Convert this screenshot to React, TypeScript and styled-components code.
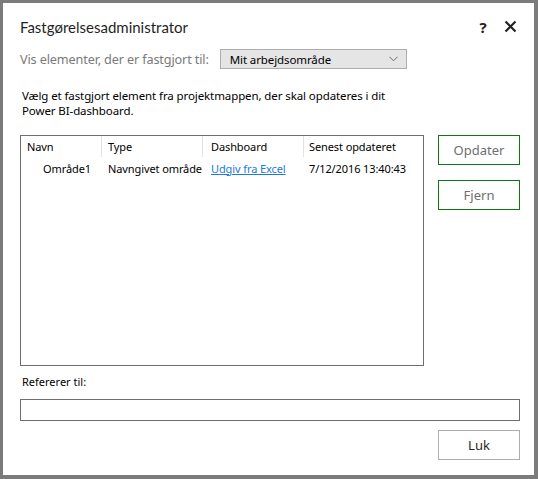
import React from "react";
import styled, { createGlobalStyle } from "styled-components";

const Global = createGlobalStyle`
  html, body { margin: 0; padding: 0; background: #ffffff; }
  body { font-family: "Noto Sans", "Open Sans", sans-serif; color: #000; }
`;

const Window = styled.div`
  box-sizing: border-box;
  width: 538px;
  height: 479px;
  border-style: solid;
  border-color: #7b7b7b;
  border-width: 3px 4px 4px 3px;
  background: #fff;
  padding: 0 14px 0 17px;
  display: flex;
  flex-direction: column;
`;

const TitleBar = styled.div`
  display: flex;
  align-items: center;
  height: 45px;
  padding-top: 2px;
  box-sizing: border-box;
`;

const Title = styled.div`
  flex: 1;
  font-family: "Lato", "Noto Sans", sans-serif;
  font-size: 15px;
  color: #1f1f1f;
`;

const IconButton = styled.button<{ $gap?: number }>`
  border: none;
  background: transparent;
  padding: 0;
  width: 20px;
  height: 20px;
  display: flex;
  align-items: center;
  justify-content: center;
  color: #222;
  font-family: "Noto Sans", sans-serif;
  font-weight: 700;
  font-size: 15px;
  margin-left: ${(p) => p.$gap ?? 0}px;
`;

const FilterRow = styled.div`
  display: flex;
  align-items: center;
  gap: 11px;
  height: 22px;
`;

const FilterLabel = styled.span`
  font-size: 12.7px;
  color: #7a7a7a;
  letter-spacing: -0.15px;
  white-space: nowrap;
`;

const Select = styled.div`
  box-sizing: border-box;
  width: 187px;
  height: 20px;
  background: #e5e5e5;
  border: 1px solid #adadad;
  display: flex;
  align-items: center;
  padding: 0 8px 0 9px;
  font-size: 11.5px;
  letter-spacing: -0.1px;
`;

const SelectText = styled.span`
  flex: 1;
`;

const Description = styled.p`
  margin: 18px 0 0 2px;
  font-size: 11.5px;
  line-height: 15px;
  letter-spacing: -0.1px;
  width: 380px;
`;

const Middle = styled.div`
  display: flex;
  gap: 14px;
  margin-top: 17px;
`;

const ListBox = styled.div`
  box-sizing: border-box;
  width: 404px;
  height: 231px;
  border: 1px solid #6e6e6e;
`;

const Grid = styled.div`
  display: grid;
  grid-template-columns: 81px 101px 101px 1fr;
  font-size: 11px;
  letter-spacing: -0.1px;
  white-space: nowrap;
`;

const HeaderCell = styled.div<{ $pad: number; $last?: boolean }>`
  height: 21px;
  display: flex;
  align-items: center;
  padding-left: ${(p) => p.$pad}px;
  border-right: 1px solid ${(p) => (p.$last ? "transparent" : "#e3e3e3")};
`;

const Cell = styled.div<{ $indent?: number }>`
  height: 22px;
  display: flex;
  align-items: center;
  padding-left: ${(p) => p.$indent ?? 6}px;
  overflow: hidden;
`;

const Link = styled.a`
  color: #1a7ae0;
  text-decoration: underline;
  cursor: pointer;
`;

const ButtonCol = styled.div`
  display: flex;
  flex-direction: column;
  gap: 15px;
`;

const Button = styled.button<{ $accent?: boolean }>`
  box-sizing: border-box;
  width: 82px;
  height: 30px;
  background: #fff;
  border: 1px solid ${(p) => (p.$accent ? "#127712" : "#adadad")};
  color: ${(p) => (p.$accent ? "#6f6f6f" : "#1f1f1f")};
  font-family: "Noto Sans", sans-serif;
  font-size: 13px;
  padding: 0;
`;

const RefLabel = styled.div`
  margin: 8px 0 0 2px;
  font-size: 11px;
  height: 15px;
  line-height: 15px;
`;

const RefInput = styled.div`
  box-sizing: border-box;
  margin-top: 10px;
  width: 500px;
  height: 22px;
  border: 1px solid #6e6e6e;
`;

const Footer = styled.div`
  display: flex;
  justify-content: flex-end;
  width: 500px;
  margin-top: 9px;
`;

export default function App() {
  return (
    <>
      <Global />
      <Window>
        <TitleBar>
          <Title>Fastgørelsesadministrator</Title>
          <IconButton aria-label="Hjælp">?</IconButton>
          <IconButton $gap={7} aria-label="Luk">
            <svg width="13" height="13" viewBox="0 0 13 13">
              <path d="M1.5 1.5 L11.5 11.5 M11.5 1.5 L1.5 11.5" stroke="#222" strokeWidth="2.2" />
            </svg>
          </IconButton>
        </TitleBar>
        <FilterRow>
          <FilterLabel>Vis elementer, der er fastgjort til:</FilterLabel>
          <Select>
            <SelectText>Mit arbejdsområde</SelectText>
            <svg width="9" height="6" viewBox="0 0 9 6">
              <path d="M0.5 0.8 L4.5 4.8 L8.5 0.8" stroke="#6a6a6a" strokeWidth="1" fill="none" />
            </svg>
          </Select>
        </FilterRow>
        <Description>
          Vælg et fastgjort element fra projektmappen, der skal opdateres i dit Power BI-dashboard.
        </Description>
        <Middle>
          <ListBox>
            <Grid>
              <HeaderCell $pad={6}>Navn</HeaderCell>
              <HeaderCell $pad={6}>Type</HeaderCell>
              <HeaderCell $pad={8}>Dashboard</HeaderCell>
              <HeaderCell $pad={5} $last>Senest opdateret</HeaderCell>
              <Cell $indent={22}>Område1</Cell>
              <Cell>Navngivet område</Cell>
              <Cell $indent={8}>
                <Link>Udgiv fra Excel</Link>
              </Cell>
              <Cell $indent={5}>7/12/2016 13:40:43</Cell>
            </Grid>
          </ListBox>
          <ButtonCol>
            <Button $accent>Opdater</Button>
            <Button $accent>Fjern</Button>
          </ButtonCol>
        </Middle>
        <RefLabel>Refererer til:</RefLabel>
        <RefInput />
        <Footer>
          <Button>Luk</Button>
        </Footer>
      </Window>
    </>
  );
}
